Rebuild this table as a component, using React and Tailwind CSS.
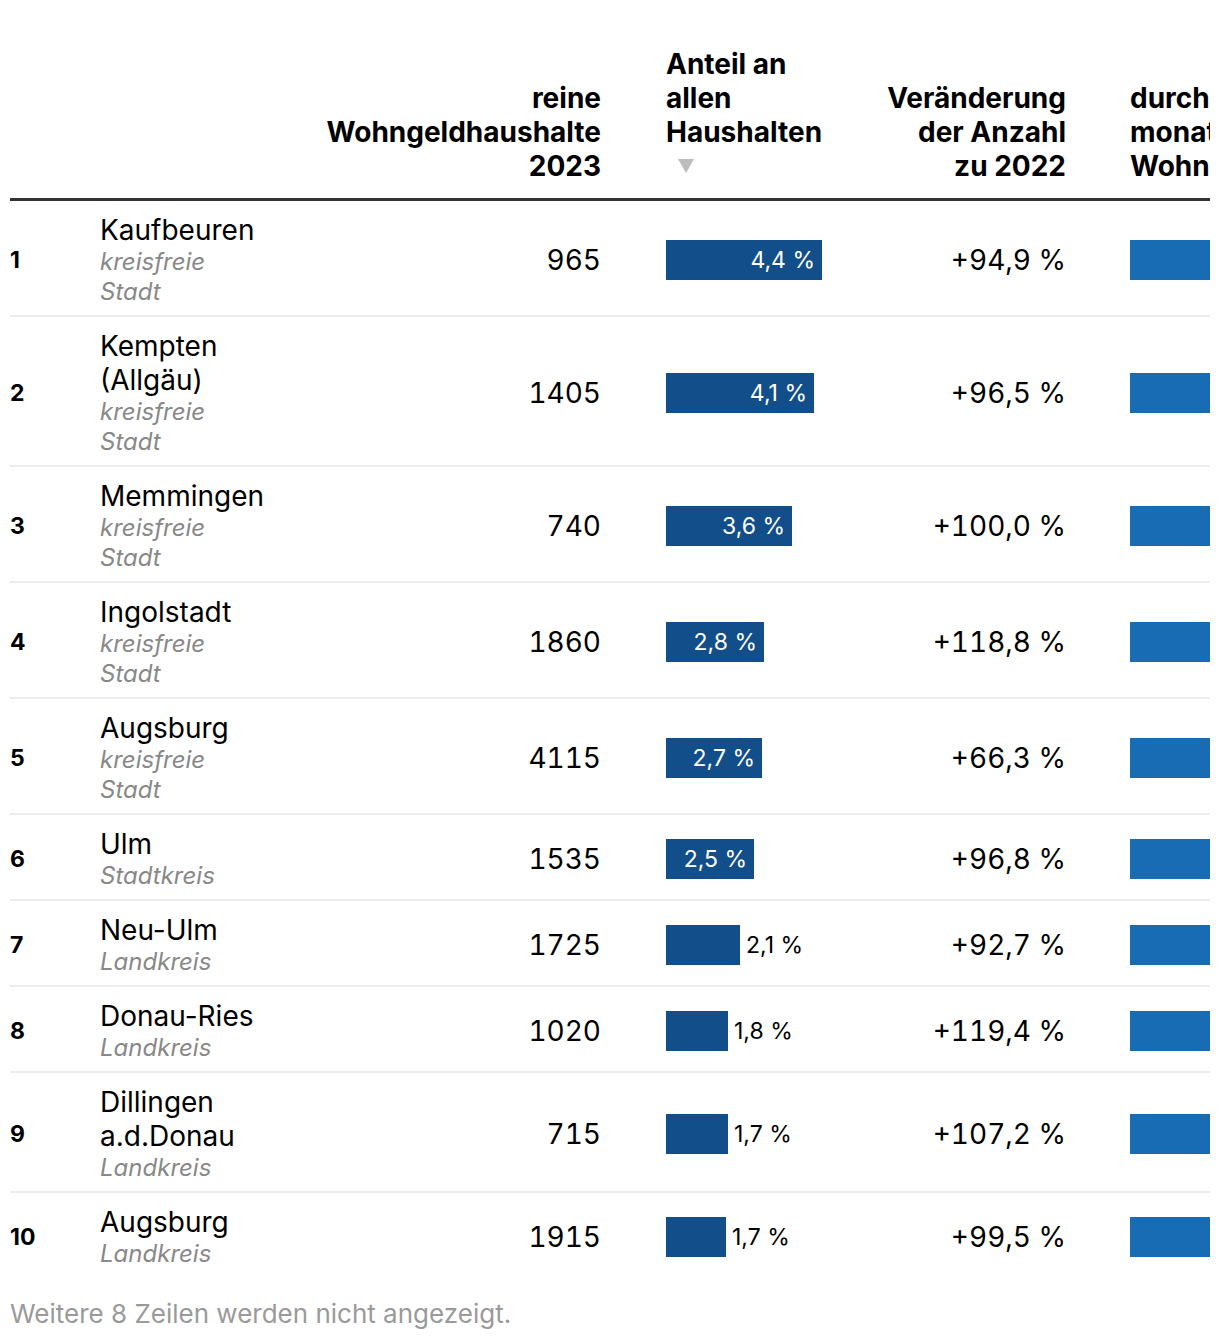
const rows = [
  { rank: 1, name: "Kaufbeuren", type: "kreisfreie Stadt", count: "965", share: "4,4 %", bar: 156, change: "+94,9 %" },
  { rank: 2, name: "Kempten (Allgäu)", type: "kreisfreie Stadt", count: "1405", share: "4,1 %", bar: 148, change: "+96,5 %" },
  { rank: 3, name: "Memmingen", type: "kreisfreie Stadt", count: "740", share: "3,6 %", bar: 126, change: "+100,0 %" },
  { rank: 4, name: "Ingolstadt", type: "kreisfreie Stadt", count: "1860", share: "2,8 %", bar: 98, change: "+118,8 %" },
  { rank: 5, name: "Augsburg", type: "kreisfreie Stadt", count: "4115", share: "2,7 %", bar: 96, change: "+66,3 %" },
  { rank: 6, name: "Ulm", type: "Stadtkreis", count: "1535", share: "2,5 %", bar: 88, change: "+96,8 %" },
  { rank: 7, name: "Neu-Ulm", type: "Landkreis", count: "1725", share: "2,1 %", bar: 74, change: "+92,7 %" },
  { rank: 8, name: "Donau-Ries", type: "Landkreis", count: "1020", share: "1,8 %", bar: 62, change: "+119,4 %" },
  { rank: 9, name: "Dillingen a.d.Donau", type: "Landkreis", count: "715", share: "1,7 %", bar: 62, change: "+107,2 %" },
  { rank: 10, name: "Augsburg", type: "Landkreis", count: "1915", share: "1,7 %", bar: 60, change: "+99,5 %" },
]

const cols = "grid grid-cols-[90px_180px_321px_240px_225px_400px]"

function App() {
  return (
    <div className="bg-white min-h-[1340px] pl-[10px] pt-[47px] font-['Inter','Liberation_Sans',sans-serif] text-black">
      <div className="w-[1200px] overflow-hidden">
        <div className="w-[1456px]">
          {/* Kopfzeile */}
          <div className={`${cols} items-end pb-[15px] border-b-[3px] border-[#333] text-[28px] leading-[34px] font-bold`}>
            <div />
            <div />
            <div className="text-right whitespace-nowrap">
              reine
              <br />
              Wohngeldhaushalte
              <br />
              2023
            </div>
            <div className="pl-[65px] whitespace-nowrap">
              Anteil an
              <br />
              allen
              <br />
              Haushalten
              <div className="h-[34px] flex items-center pl-[12px]">
                <svg width="16" height="14" viewBox="0 0 16 14">
                  <polygon points="0,0 16,0 8,14" fill="#bdbdbd" />
                </svg>
              </div>
            </div>
            <div className="text-right whitespace-nowrap">
              Veränderung
              <br />
              der Anzahl
              <br />
              zu 2022
            </div>
            <div className="pl-[64px] whitespace-nowrap">
              durchschnittlicher
              <br />
              monatlicher
              <br />
              Wohngeldanspruch
            </div>
          </div>

          {/* Zeilen */}
          {rows.map((row, i) => (
            <div
              key={row.rank}
              className={`${cols} items-center ${i < rows.length - 1 ? 'border-b-2 border-[#ececec]' : ''}`}
            >
              <div className="pt-[4px] text-[23px] font-bold">{row.rank}</div>
              <div className="pt-[12px] pb-[8px] pr-[8px]">
                <div className="text-[28px] leading-[34px]">{row.name}</div>
                <div className="text-[24px] leading-[30px] italic text-[#888]">{row.type}</div>
              </div>
              <div className="pt-[4px] text-right text-[28px] tabular-nums">{row.count}</div>
              <div className="pt-[4px] pl-[65px] flex items-center">
                {row.bar >= 88 ? (
                  <div
                    className="h-[40px] bg-[#124e89] flex items-center justify-end pr-[7px] text-white text-[23px]"
                    style={{ width: row.bar }}
                  >
                    {row.share}
                  </div>
                ) : (
                  <>
                    <div className="h-[40px] bg-[#124e89]" style={{ width: row.bar }} />
                    <span className="ml-[6px] text-[23px]">{row.share}</span>
                  </>
                )}
              </div>
              <div className="pt-[4px] text-right text-[28px] tabular-nums">{row.change}</div>
              <div className="pt-[4px] pl-[64px]">
                <div className="h-[40px] w-[200px] bg-[#176cb4]" />
              </div>
            </div>
          ))}
        </div>
      </div>

      <p className="mt-[22px] text-[26px] leading-[30px] text-[#9a9a9a]">
        Weitere 8 Zeilen werden nicht angezeigt.
      </p>
    </div>
  )
}

export default App
